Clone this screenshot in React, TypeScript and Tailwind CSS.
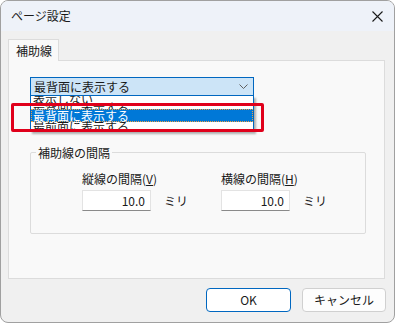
import React from 'react'

const JP = "font-['Noto_Sans_CJK_JP','Noto_Sans',sans-serif]"

function Field({ label, mnemonic }: { label: string; mnemonic: string }) {
  return (
    <div className="w-[139px] flex flex-col">
      <div className="h-[16px] text-[12px] leading-[16px] text-[#1a1a1a]">
        {label}(<span className="underline">{mnemonic}</span>)
      </div>
      <div className="mt-[3px] flex items-center">
        <div className="w-[69px] h-[21px] bg-white border border-[#e3e3e3] border-b-[#8a8a8a] flex items-center justify-end pr-[5px] text-[12px] text-[#1a1a1a]">
          10.0
        </div>
        <span className="ml-[13px] text-[12px] text-[#1a1a1a]">ミリ</span>
      </div>
    </div>
  )
}

export default function App() {
  return (
    <div className={`${JP} w-[395px] h-[323px] bg-white`}>
      <div className="w-[395px] h-[323px] rounded-[8px] border border-[#a0a0a0] bg-[#f0f0f0] overflow-hidden flex flex-col">
        {/* title bar */}
        <div className="h-[30px] bg-[#eef2f9] flex items-center justify-between pl-[10px] pr-[11px] shrink-0">
          <span className="text-[12px] text-[#1a1a1a]">ページ設定</span>
          <svg width="11" height="11" viewBox="0 0 11 11">
            <path d="M0.5 0.5 L10.5 10.5 M10.5 0.5 L0.5 10.5" stroke="#1a1a1a" strokeWidth="1.1" />
          </svg>
        </div>

        {/* tabs */}
        <div className="pl-[7px] pr-[9px] pt-[8px]">
          <div className="w-[51px] h-[22px] border border-b-0 border-[#dcdcdc] bg-[#f9f9f9] flex items-center pl-[7px] text-[12px] text-[#1a1a1a] relative z-10 -mb-px">
            補助線
          </div>
          <div className="relative h-[219px] border border-[#dcdcdc] bg-[#f9f9f9]">
            {/* combo */}
            <div className="absolute left-[21px] top-[16px] w-[224px]">
              <div className="h-[19px] border border-[#0067c0] bg-[#cce4f7] flex items-center justify-between pl-[3px] pr-[5px] text-[12px] text-[#1a1a1a]">
                <span>最背面に表示する</span>
                <svg width="9" height="6" viewBox="0 0 9 6">
                  <path d="M0.5 0.5 L4.5 4.5 L8.5 0.5" stroke="#606060" strokeWidth="1" fill="none" />
                </svg>
              </div>
              {/* dropdown list */}
              <div className="relative h-[36px] border border-t-0 border-[#0067c0] bg-white overflow-hidden shadow-[2px_2px_2px_rgba(0,0,0,0.3)] text-[12px] leading-[13px]">
                <div className="absolute left-[2px] top-[-4px] text-[#1a1a1a]">表示しない</div>
                <div className="absolute left-[2px] top-[5px] text-[#1a1a1a]">最背面に表示する</div>
                <div className="absolute left-[2px] top-[24px] text-[#1a1a1a]">最前面に表示する</div>
                <div className="absolute left-0 right-0 top-[13px] h-[13px] bg-[#0078d7] border border-dotted border-[#f0a040] text-white pl-[1px] leading-[11px]">
                  最背面に表示する
                </div>
              </div>
            </div>
            {/* red annotation */}
            <div className="absolute left-[2px] top-[42px] w-[253px] h-[29px] border-[3px] border-[#e0001b] rounded-[2px]" />

            {/* group box */}
            <div className="absolute left-[21px] top-[91px] w-[336px] h-[82px] border border-[#dcdcdc] rounded-[2px]">
              <span className="absolute left-[5px] top-[-8px] bg-[#f9f9f9] px-[2px] text-[12px] leading-[16px] text-[#1a1a1a]">
                補助線の間隔
              </span>
              <div className="flex pl-[51px] pt-[18px]">
                <Field label="縦線の間隔" mnemonic="V" />
                <Field label="横線の間隔" mnemonic="H" />
              </div>
            </div>
          </div>
        </div>

        {/* buttons */}
        <div className="flex justify-end gap-[11px] pr-[8px] mt-[9px]">
          <button className="w-[85px] h-[24px] rounded-[4px] border border-[#0067c0] bg-white text-[12px] text-[#1a1a1a]">
            OK
          </button>
          <button className="w-[84px] h-[24px] rounded-[4px] border border-[#d0d0d0] bg-[#fdfdfd] text-[12px] text-[#1a1a1a]">
            キャンセル
          </button>
        </div>
      </div>
    </div>
  )
}
